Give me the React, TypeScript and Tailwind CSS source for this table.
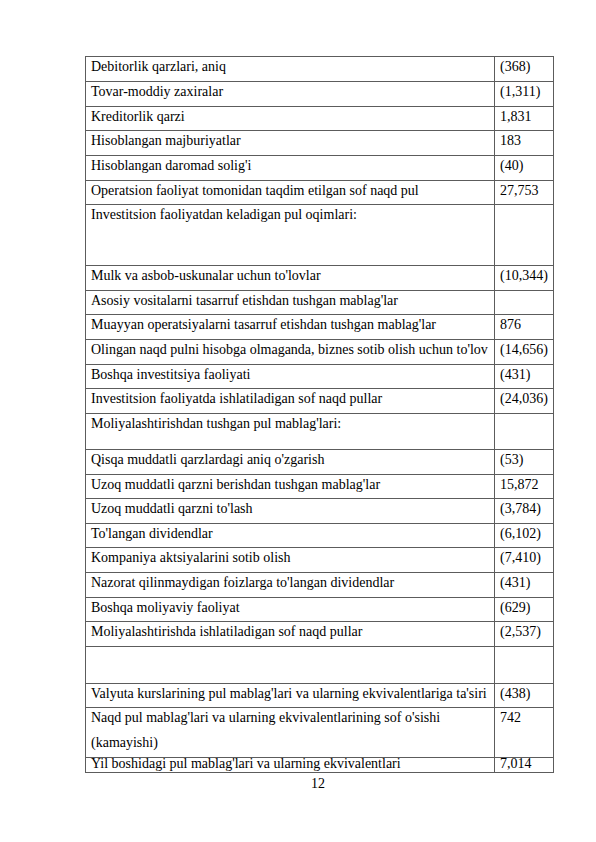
const rows: { label: string; value: string; h: string; last?: boolean }[] = [
  { label: "Debitorlik qarzlari, aniq", value: "(368)", h: "h-[25px]" },
  { label: "Tovar-moddiy zaxiralar", value: "(1,311)", h: "h-[25px]" },
  { label: "Kreditorlik qarzi", value: "1,831", h: "h-[24px]" },
  { label: "Hisoblangan majburiyatlar", value: "183", h: "h-[25px]" },
  { label: "Hisoblangan daromad solig'i", value: "(40)", h: "h-[25px]" },
  { label: "Operatsion faoliyat tomonidan taqdim etilgan sof naqd pul", value: "27,753", h: "h-[24px]" },
  { label: "Investitsion faoliyatdan keladigan pul oqimlari:", value: "", h: "h-[61px]" },
  { label: "Mulk va asbob-uskunalar uchun to'lovlar", value: "(10,344)", h: "h-[25px]" },
  { label: "Asosiy vositalarni tasarruf etishdan tushgan mablag'lar", value: "", h: "h-[24px]" },
  { label: "Muayyan operatsiyalarni tasarruf etishdan tushgan mablag'lar", value: "876", h: "h-[25px]" },
  { label: "Olingan naqd pulni hisobga olmaganda, biznes sotib olish uchun to'lov", value: "(14,656)", h: "h-[25px]" },
  { label: "Boshqa investitsiya faoliyati", value: "(431)", h: "h-[24px]" },
  { label: "Investitsion faoliyatda ishlatiladigan sof naqd pullar", value: "(24,036)", h: "h-[25px]" },
  { label: "Moliyalashtirishdan tushgan pul mablag'lari:", value: "", h: "h-[36px]" },
  { label: "Qisqa muddatli qarzlardagi aniq o'zgarish", value: "(53)", h: "h-[25px]" },
  { label: "Uzoq muddatli qarzni berishdan tushgan mablag'lar", value: "15,872", h: "h-[24px]" },
  { label: "Uzoq muddatli qarzni to'lash", value: "(3,784)", h: "h-[25px]" },
  { label: "To'langan dividendlar", value: "(6,102)", h: "h-[24px]" },
  { label: "Kompaniya aktsiyalarini sotib olish", value: "(7,410)", h: "h-[25px]" },
  { label: "Nazorat qilinmaydigan foizlarga to'langan dividendlar", value: "(431)", h: "h-[25px]" },
  { label: "Boshqa moliyaviy faoliyat", value: "(629)", h: "h-[24px]" },
  { label: "Moliyalashtirishda ishlatiladigan sof naqd pullar", value: "(2,537)", h: "h-[25px]" },
  { label: "", value: "", h: "h-[37px]" },
  { label: "Valyuta kurslarining pul mablag'lari va ularning ekvivalentlariga ta'siri", value: "(438)", h: "h-[24px]" },
  { label: "Naqd pul mablag'lari va ularning ekvivalentlarining sof o'sishi (kamayishi)", value: "742", h: "h-[50px]" },
  { label: "Yil boshidagi pul mablag'lari va ularning ekvivalentlari", value: "7,014", h: "h-[15px]", last: true },
];

export default function App() {
  return (
    <div className="w-[596px] h-[842px] bg-white text-black font-['Liberation_Serif',serif] text-[14px] overflow-hidden">
      <div className="pt-[56px] pl-[85px]">
        <div className="w-[469px] border-t border-l border-[#5c5c5c]">
          {rows.map((r, i) => (
            <div key={i} className={`flex ${r.h} border-b border-[#5c5c5c]`}>
              <div className="w-[409px] shrink-0 border-r border-[#5c5c5c] pl-[5px] pr-[2px]">
                <div className={r.last ? "leading-[18px] -mt-[3px]" : "leading-[25px] -mt-[3px]"}>{r.label}</div>
              </div>
              <div className="flex-1 border-r border-[#5c5c5c] pl-[5px]">
                <div className={r.last ? "leading-[18px] -mt-[3px]" : "leading-[25px] -mt-[3px]"}>{r.value}</div>
              </div>
            </div>
          ))}
        </div>
      </div>
      <div className="w-[596px] text-center leading-[16px] mt-[3px] pl-[40px]">12</div>
    </div>
  );
}
